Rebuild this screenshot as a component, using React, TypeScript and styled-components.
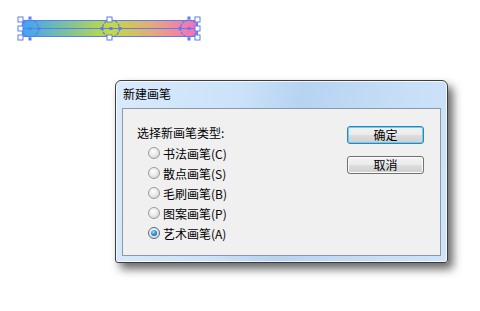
import React from "react";
import styled, { createGlobalStyle } from "styled-components";

const GlobalStyle = createGlobalStyle`
  html, body {
    margin: 0;
    padding: 0;
    background: #ffffff;
  }
  body {
    width: 480px;
    height: 311px;
    overflow: hidden;
    font-family: "Noto Sans CJK SC", "Microsoft YaHei", sans-serif;
    font-size: 12px;
    color: #000;
  }
`;

const Page = styled.div`
  box-sizing: border-box;
  width: 480px;
  height: 311px;
  padding: 14px 0 0 15px;
`;

const Artwork = styled.svg`
  display: block;
`;

const Window = styled.div`
  box-sizing: border-box;
  width: 333px;
  height: 183px;
  margin: 36px 0 0 100px;
  padding: 0 6px 6px 6px;
  display: flex;
  flex-direction: column;
  border: 1px solid #3d3d3d;
  border-radius: 6px 6px 3px 3px;
  background: linear-gradient(
      100deg,
      #d9eafb 0%,
      #cbe2f9 35%,
      #b6d3f1 52%,
      #c4ddf6 75%,
      #cfe4fa 100%
    );
  box-shadow: inset 0 0 0 1px rgba(255, 255, 255, 0.75),
    5px 6px 10px rgba(0, 0, 0, 0.6);
`;

const TitleBar = styled.div`
  height: 27px;
  flex: none;
  display: flex;
  align-items: center;
  padding-left: 1px;
`;

const Title = styled.span`
  line-height: 14px;
  margin-top: -1px;
  color: #000;
`;

const Client = styled.div`
  box-sizing: border-box;
  flex: 1;
  display: flex;
  justify-content: space-between;
  border: 1px solid #8d99a8;
  background: #f0f0f0;
`;

const Options = styled.div`
  padding: 14px 0 0 14px;
`;

const Prompt = styled.div`
  line-height: 20px;
`;

const RadioList = styled.div`
  padding-left: 11px;
`;

const RadioRow = styled.label`
  height: 20px;
  display: flex;
  align-items: center;
  gap: 3px;
`;

const RadioDot = styled.span<{ checked?: boolean }>`
  box-sizing: border-box;
  width: 12px;
  height: 12px;
  border-radius: 50%;
  display: flex;
  align-items: center;
  justify-content: center;
  border: 1px solid ${(p) => (p.checked ? "#5a6a7a" : "#9b9b9b")};
  background: radial-gradient(circle at 40% 35%, #ffffff 0%, #e6e6e6 55%, #c4c4c4 100%);
  &::after {
    content: "";
    width: 6px;
    height: 6px;
    border-radius: 50%;
    display: ${(p) => (p.checked ? "block" : "none")};
    background: radial-gradient(circle at 40% 35%, #9be2ff 0%, #2a8ad8 50%, #0d4f96 100%);
  }
`;

const Buttons = styled.div`
  display: flex;
  flex-direction: column;
  gap: 12px;
  padding: 17px 16px 0 0;
`;

const Button = styled.button<{ primary?: boolean }>`
  box-sizing: border-box;
  width: 77px;
  height: 18px;
  padding: 0;
  font-family: inherit;
  font-size: 12px;
  line-height: 14px;
  color: #000;
  border-radius: 3px;
  border: 1px solid ${(p) => (p.primary ? "#3c7fb1" : "#707070")};
  background: linear-gradient(#f2f2f2 0%, #ebebeb 48%, #dddddd 52%, #cfcfcf 100%);
  box-shadow: ${(p) =>
    p.primary ? "inset 0 0 0 1px #5fd3fb" : "inset 0 0 0 1px #fcfcfc"};
`;

const brushes = [
  "书法画笔(C)",
  "散点画笔(S)",
  "毛刷画笔(B)",
  "图案画笔(P)",
  "艺术画笔(A)",
];

const handleXs = [5.5, 94.5, 182.5];
const handleYs = [5.5, 14.5, 23.5];

const GradientSwatch = () => (
  <Artwork width={190} height={30} viewBox="0 0 190 30">
    <defs>
      <linearGradient id="brush" x1="0" y1="0" x2="1" y2="0">
        <stop offset="0" stopColor="#3aa6f6" />
        <stop offset="0.5" stopColor="#c2dc3e" />
        <stop offset="0.75" stopColor="#e4a87e" />
        <stop offset="1" stopColor="#f86cbc" />
      </linearGradient>
    </defs>
    <rect x={7.5} y={6.5} width={175} height={16} fill="url(#brush)" stroke="#5b7cf2" />
    <line x1={7} y1={14.5} x2={183} y2={14.5} stroke="#5b7cf2" />
    {[15, 96, 174].map((cx) => (
      <circle
        key={cx}
        cx={cx}
        cy={14.5}
        r={8.5}
        fill="none"
        stroke="#5b7cf2"
        strokeWidth={1.2}
        strokeDasharray="3 1"
      />
    ))}
    {[
      [15, 14.5],
      [96, 14.5],
      [174, 14.5],
      [24, 14.5],
      [87, 14.5],
      [105, 14.5],
      [165, 14.5],
      [15, 4],
      [15, 25],
      [174, 4],
      [174, 25],
    ].map(([x, y]) => (
      <rect key={`${x}-${y}`} x={x - 1.5} y={y - 1.5} width={3} height={3} fill="#5b7cf2" />
    ))}
    {handleXs.map((x) =>
      handleYs
        .filter((y) => !(x === 94.5 && y === 14.5))
        .map((y) => (
          <rect
            key={`h${x}-${y}`}
            x={x - 2.5}
            y={y - 2.5}
            width={5}
            height={5}
            fill="#ffffff"
            stroke="#5b7cf2"
          />
        ))
    )}
  </Artwork>
);

const App: React.FC = () => {
  return (
    <>
      <GlobalStyle />
      <Page>
        <GradientSwatch />
        <Window>
          <TitleBar>
            <Title>新建画笔</Title>
          </TitleBar>
          <Client>
            <Options>
              <Prompt>选择新画笔类型:</Prompt>
              <RadioList>
                {brushes.map((name, i) => (
                  <RadioRow key={name}>
                    <RadioDot checked={i === brushes.length - 1} />
                    {name}
                  </RadioRow>
                ))}
              </RadioList>
            </Options>
            <Buttons>
              <Button primary>确定</Button>
              <Button>取消</Button>
            </Buttons>
          </Client>
        </Window>
      </Page>
    </>
  );
};

export default App;
